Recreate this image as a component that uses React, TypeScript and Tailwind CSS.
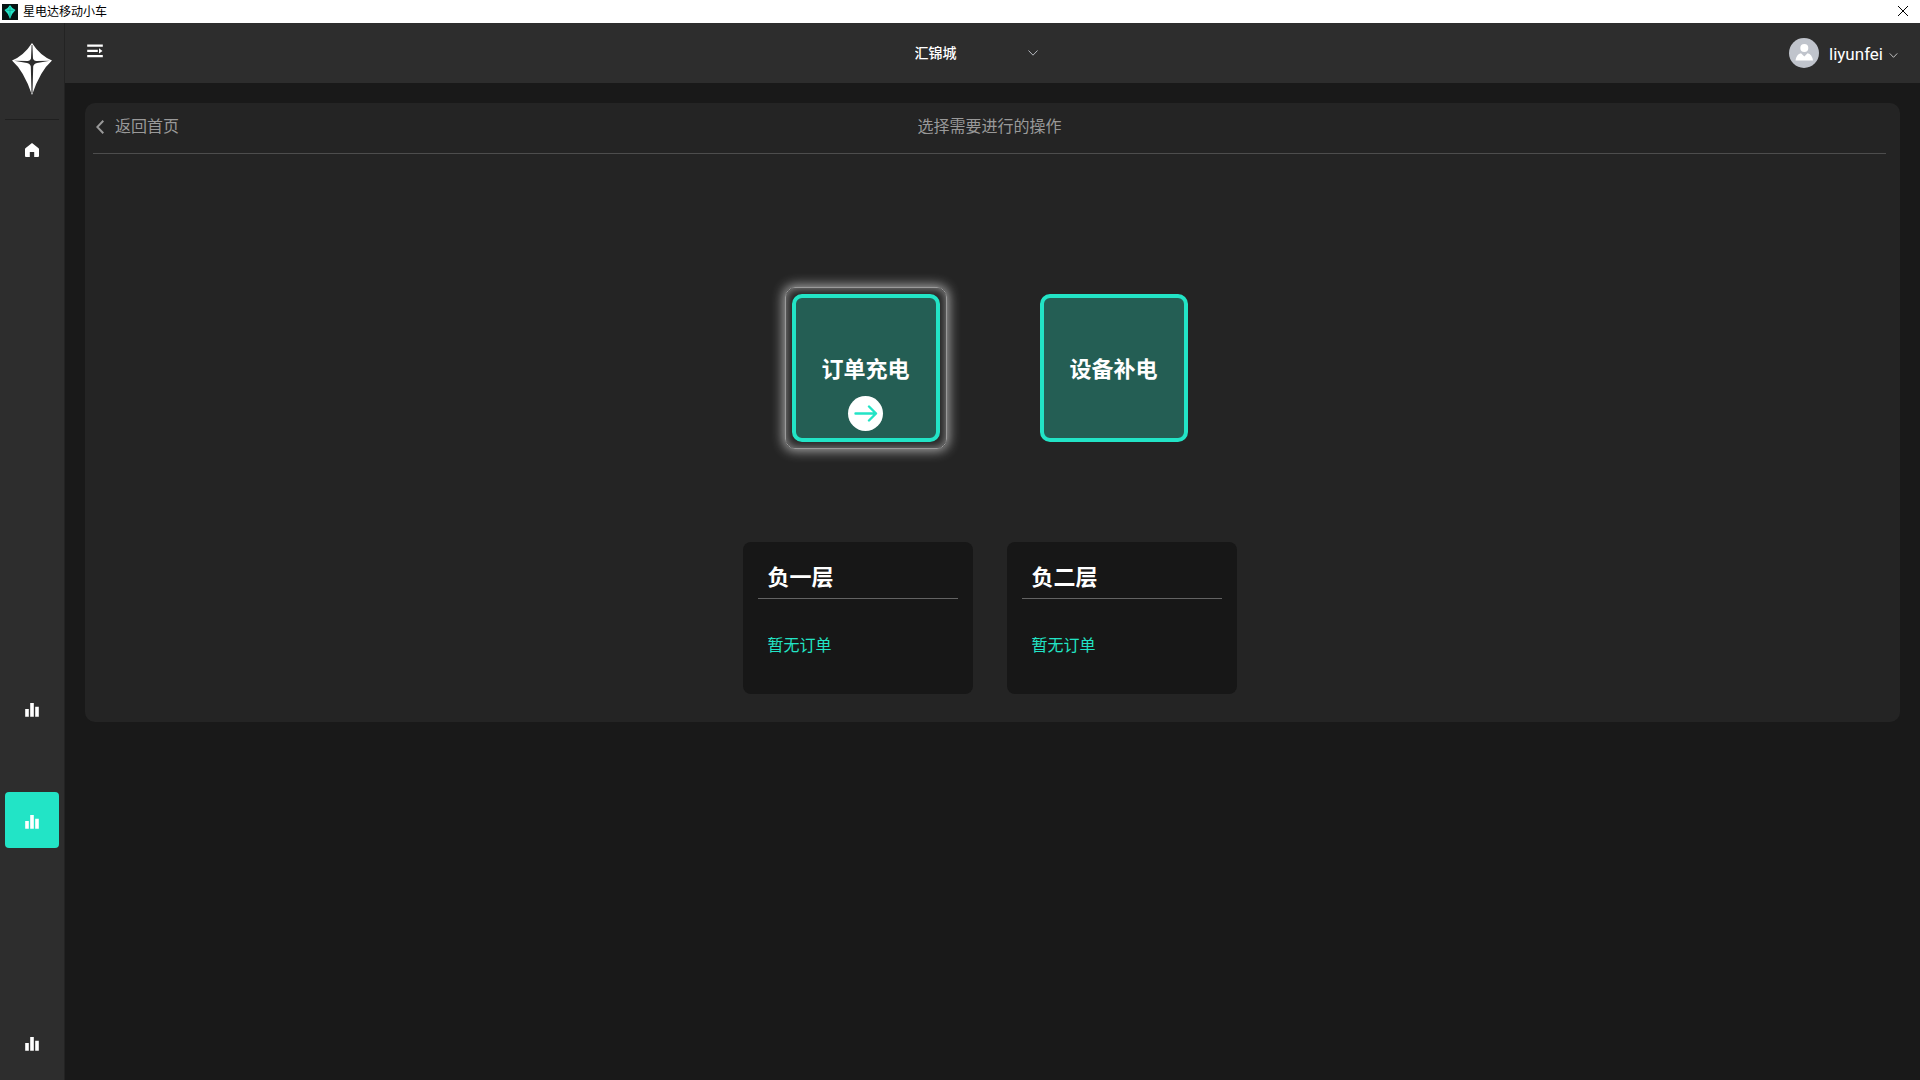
import React, { useState } from 'react';

const communities = ['汇锦城'];

const floors = [
  { id: 'b1', name: '负一层', orders: '暂无订单' },
  { id: 'b2', name: '负二层', orders: '暂无订单' },
];

const BarsIcon: React.FC = () => (
  <svg viewBox="0 0 14 14" className="h-3.5 w-3.5" fill="currentColor">
    <path d="M.2 6h3.600v7.800H.2zM5.200 .1h3.600v13.700H5.200zM10.200 3.700h3.600v10.100h-3.600z" />
  </svg>
);

const HomeIcon: React.FC = () => (
  <svg viewBox="0 0 14 14" className="h-3.5 w-3.5" fill="currentColor">
    <path d="M7 0 L13.6 5.2 Q14 5.6 14 6 V13 Q14 14 13 14 H9.2 V9 H4.8 V14 H1 Q0 14 0 13 V6 Q0 5.6 .4 5.2 Z" />
  </svg>
);

const ChevronDown: React.FC<{ className?: string }> = ({ className }) => (
  <svg viewBox="0 0 10 6" className={className} fill="none" stroke="currentColor">
    <path d="M.5 .5 5 5.2 9.5 .5" />
  </svg>
);

const Logo: React.FC = () => (
  <svg viewBox="0 0 40 52" className="h-[52px] w-10">
    <path d="M20 0 Q28 12.500 40 17.500 Q28 28 20 52 Q12 28 0 17.500 Q12 12.500 20 0Z" fill="#fff" />
    <path
      d="M19.600 2 H20.400 L21 15.500 Q21.500 17.500 24 18 L38 17.700 L25 20 Q21.800 20.500 21.200 23.500 L20.500 50 H19.500 L18.800 23.500 Q18.200 20.500 15 20 L2 17.700 L16 18 Q18.500 17.500 19 15.500Z"
      fill="#2d2d2d"
    />
  </svg>
);

const NavItem: React.FC<{
  label: string;
  active: boolean;
  onClick: () => void;
  children: React.ReactNode;
}> = ({ label, active, onClick, children }) => (
  <button
    aria-label={label}
    onClick={onClick}
    className={`flex h-14 w-full items-center justify-center rounded pt-1 text-white ${active ? 'bg-[#22e4c6]' : ''}`}
  >
    {children}
  </button>
);

const App: React.FC = () => {
  const [active, setActive] = useState('cart');
  const [mode, setMode] = useState('order');

  const modes = [
    { id: 'order', name: '订单充电' },
    { id: 'device', name: '设备补电' },
  ];

  return (
    <div className="flex min-h-screen flex-col bg-[#191919] font-[Roboto,'Noto_Sans_CJK_SC',sans-serif] text-white">
      {/* Window title bar */}
      <div className="flex h-[23px] items-center justify-between bg-white pl-0.5 pr-3 text-black">
        <div className="flex items-center gap-[5px]">
          <svg viewBox="0 0 16 16" className="h-4 w-4">
            <rect width="16" height="16" fill="#071413" />
            <path d="M8 1 Q10 4.500 13.500 6 Q9.500 9.500 8 15 Q6.500 9.500 2.500 6 Q6 4.500 8 1Z" fill="#22e4c6" />
            <path d="M8 3v10M4.500 6.300h7" stroke="#0f8f7d" strokeWidth=".6" />
          </svg>
          <span className="text-xs leading-4">星电达移动小车</span>
        </div>
        <button aria-label="关闭" className="pb-0.5">
          <svg viewBox="0 0 10 10" className="h-2.5 w-2.5" stroke="currentColor">
            <path d="M0 0 10 10M10 0 0 10" />
          </svg>
        </button>
      </div>

      <div className="flex flex-1">
        {/* Sidebar */}
        <aside className="flex w-[65px] flex-col border-r border-[#232323] bg-[#2d2d2d] px-[5px] pb-2.5">
          <div className="flex h-[97px] justify-center border-b border-[#1f1f1f] pt-5">
            <Logo />
          </div>
          <nav className="flex flex-1 flex-col">
            <NavItem label="首页" active={active === 'home'} onClick={() => setActive('home')}>
              <HomeIcon />
            </NavItem>
            <div className="flex-1" />
            <NavItem label="统计" active={active === 'stats'} onClick={() => setActive('stats')}>
              <BarsIcon />
            </NavItem>
            <div className="h-14" />
            <NavItem label="小车" active={active === 'cart'} onClick={() => setActive('cart')}>
              <BarsIcon />
            </NavItem>
            <div className="h-[166px]" />
            <NavItem label="报表" active={active === 'report'} onClick={() => setActive('report')}>
              <BarsIcon />
            </NavItem>
          </nav>
        </aside>

        <div className="flex flex-1 flex-col">
          {/* Header */}
          <header className="grid h-[60px] grid-cols-[1fr_auto_1fr] items-center bg-[#2d2d2d] px-[22px]">
            <button aria-label="展开菜单" className="justify-self-start pb-1">
              <svg viewBox="0 0 16 14" className="h-3.5 w-4" fill="currentColor">
                <path d="M.2 .6h15.600v2.200H.2zM.2 5.800h10.600v2.200H.2zM.2 11h15.600v2.200H.2zM12 4.200l3.500 2.700L12 9.600z" />
              </svg>
            </button>
            <div className="relative">
              <select
                aria-label="小区"
                className="h-8 w-[156px] appearance-none bg-transparent text-sm font-medium text-white outline-none"
              >
                {communities.map((name) => (
                  <option key={name}>{name}</option>
                ))}
              </select>
              <ChevronDown className="pointer-events-none absolute right-[33px] top-[13px] h-1.5 w-2.5 text-[#b5b8be]" />
            </div>
            <button className="flex items-center justify-self-end">
              <svg viewBox="0 0 30 30" className="h-[30px] w-[30px]">
                <circle cx="15" cy="15" r="15" fill="#c0c4cc" />
                <circle cx="15.300" cy="10" r="4" fill="#fff" />
                <path d="M6.500 22.500 Q7.500 16 12 15.200 L15.300 18.500 L18.600 15.200 Q23 16 24 22.500Z" fill="#fff" />
              </svg>
              <span className="ml-2.5 pt-0.5 text-[17px] leading-6">liyunfei</span>
              <ChevronDown className="ml-1.5 mt-1 h-[5px] w-[9px] text-[#dddddd]" />
            </button>
          </header>

          {/* Operation panel */}
          <main className="mx-5 mt-5 rounded-[10px] bg-[#242424] pb-7 pl-2 pr-3.5">
            <div className="grid h-[51px] grid-cols-[1fr_auto_1fr] items-center border-b border-[#4d4d4d] pb-0.5 text-base text-[#999999]">
              <a href="#" className="flex items-center gap-[11px] justify-self-start pl-[3px]">
                <svg viewBox="0 0 8 14" className="h-3.5 w-2" fill="none" stroke="currentColor" strokeWidth="2">
                  <path d="M7.300 .8 1.300 7l6 6.200" />
                </svg>
                返回首页
              </a>
              <h1>选择需要进行的操作</h1>
            </div>

            <div className="mt-[140px] flex justify-center gap-[100px]">
              {modes.map((item) => (
                <div
                  key={item.id}
                  className={`-m-[7px] rounded-[10px] border p-1.5 ${
                    mode === item.id
                      ? 'border-[#9a9a9a] shadow-[0_0_12px_2px_rgba(255,255,255,0.6),inset_0_0_10px_rgba(255,255,255,0.5)]'
                      : 'border-transparent'
                  }`}
                >
                  <button
                    onClick={() => setMode(item.id)}
                    className="relative flex h-[148px] w-[148px] items-center justify-center rounded-[10px] border-4 border-[#22e4c6] bg-[#245e54] pt-0.5 text-[22px] font-bold"
                  >
                    {item.name}
                    {mode === item.id && (
                      <span className="absolute bottom-[7px] flex h-[35px] w-[35px] items-center justify-center rounded-full bg-white text-[#22e4c6]">
                        <svg
                          viewBox="0 0 24 18"
                          className="h-[18px] w-6"
                          fill="none"
                          stroke="currentColor"
                          strokeWidth="2.400"
                          strokeLinecap="round"
                          strokeLinejoin="round"
                        >
                          <path d="M1.500 8.500h20.500M15 1.500l7 7-7 7" />
                        </svg>
                      </span>
                    )}
                  </button>
                </div>
              ))}
            </div>

            <div className="mt-[100px] flex justify-center gap-[34px]">
              {floors.map((floor) => (
                <section key={floor.id} className="h-[152px] w-[230px] rounded-lg bg-[#171717] px-[15px] pt-4">
                  <h2 className="h-[41px] border-b border-[#636363] pl-2.5 text-[22px] font-bold leading-10">
                    {floor.name}
                  </h2>
                  <p className="mt-[35px] pl-2.5 text-base leading-6 text-[#22e4c6]">{floor.orders}</p>
                </section>
              ))}
            </div>
          </main>
        </div>
      </div>
    </div>
  );
};

export default App;
